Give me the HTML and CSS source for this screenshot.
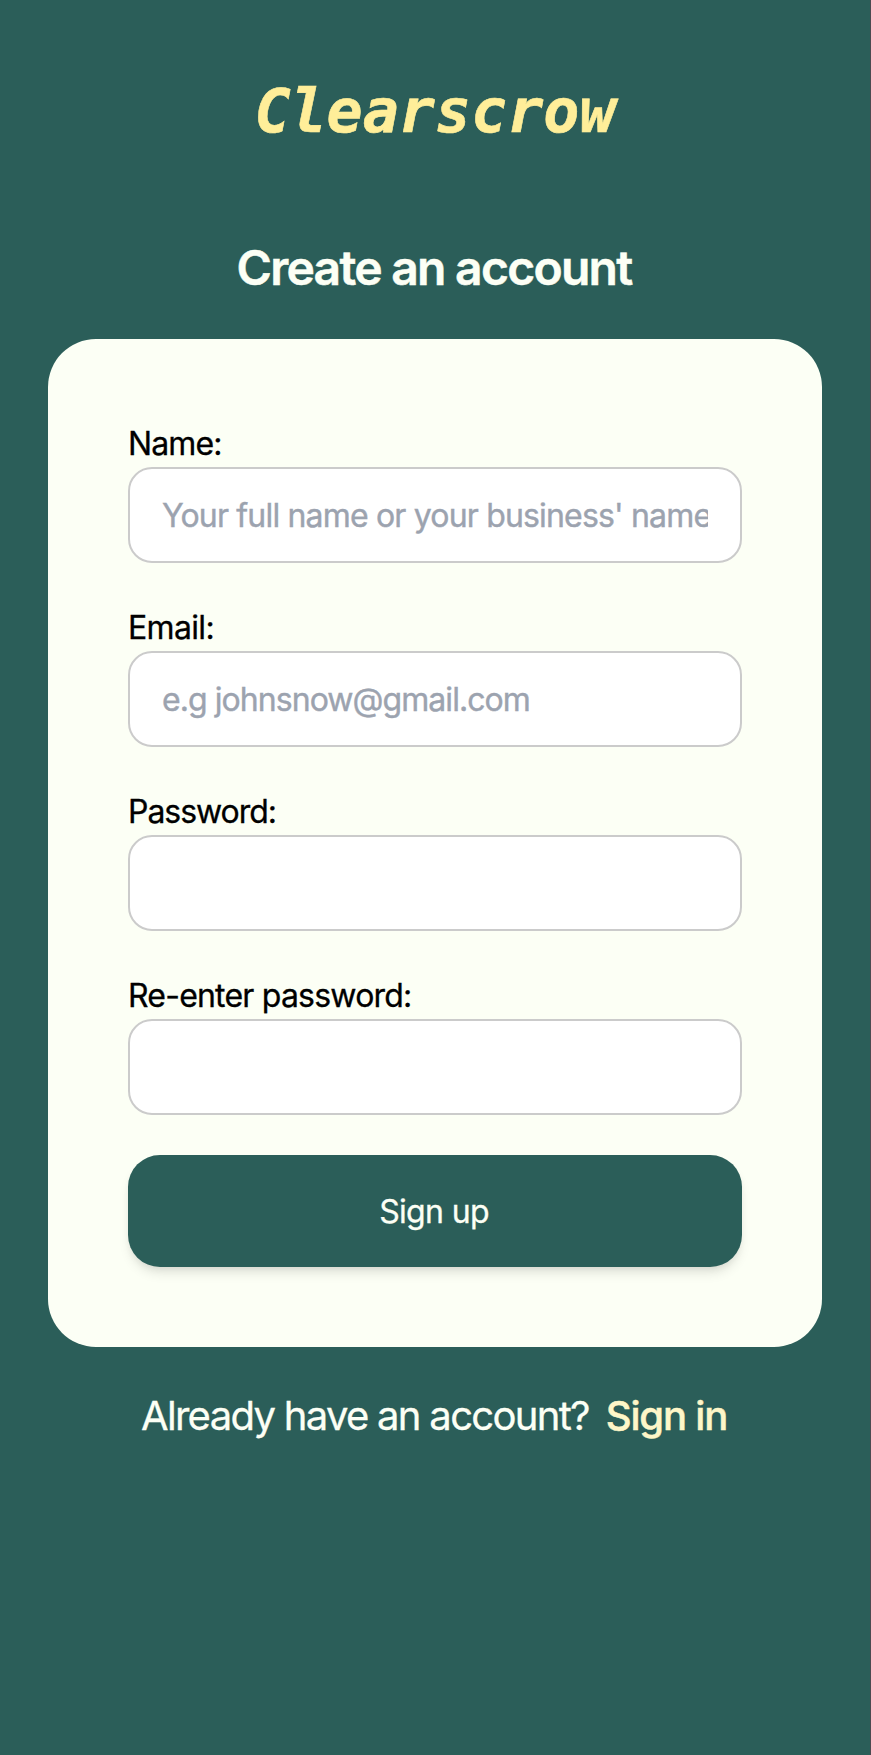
FILE: index.html
```html
<!DOCTYPE html>
<html lang="en">
<head>
<meta charset="utf-8">
<title>Clearscrow - Create an account</title>
<link rel="stylesheet" href="styles.css">
</head>
<body>
<main class="page">
  <div class="logo">Clearscrow</div>
  <h1 class="title">Create an account</h1>
  <form class="card">
    <div class="field">
      <label class="label label-name" for="name">Name:</label>
      <input class="input input-name" id="name" type="text" placeholder="Your full name or your business' name">
    </div>
    <div class="field">
      <label class="label label-email" for="email">Email:</label>
      <input class="input input-email" id="email" type="email" placeholder="e.g johnsnow@gmail.com">
    </div>
    <div class="field">
      <label class="label label-password" for="password">Password:</label>
      <input class="input" id="password" type="password">
    </div>
    <div class="field">
      <label class="label" for="confirm">Re-enter password:</label>
      <input class="input" id="confirm" type="password">
    </div>
    <button class="submit" type="button">Sign up</button>
  </form>
  <p class="footer"><span class="question">Already have an account?</span><a class="signin" href="#">Sign in</a></p>
</main>
</body>
</html>
```
FILE: styles.css
```css
* { box-sizing: border-box; }

body {
  margin: 0;
  background: #2b5e59;
  font-family: Inter, "Liberation Sans", sans-serif;
  font-size: 32px;
  line-height: 48px;
  -webkit-text-stroke-width: 0.3px;
  color: #000;
}

.page {
  min-height: 1755px;
  padding: 81px 48px 0;
  border-right: 1px solid #4b4a50;
  display: flex;
  flex-direction: column;
  align-items: stretch;
}

.logo {
  font: italic 700 60px/60px "DejaVu Sans Mono", monospace;
  -webkit-text-stroke-width: 0.6px;
  color: #ffee99;
  text-align: center;
}

.title {
  margin: 95px 0 39px;
  padding-right: 2px;
  font-size: 48px;
  line-height: 64px;
  font-weight: 600;
  -webkit-text-stroke-width: 0.5px;
  letter-spacing: -1.72px;
  color: #fcfff5;
  text-align: center;
}

.card {
  padding: 80px;
  border-radius: 48px;
  background: #fcfff5;
  display: flex;
  flex-direction: column;
  gap: 40px;
}

.field {
  display: flex;
  flex-direction: column;
}

.label {
  height: 48px;
  padding-top: 1px;
  letter-spacing: -0.79px;
}
.label-name { letter-spacing: -0.9px; }
.label-email { letter-spacing: -0.67px; }
.label-password { letter-spacing: -1.05px; }

.input {
  width: 100%;
  height: 96px;
  padding: 0 32px;
  border: 2px solid #cbcbcb;
  border-radius: 24px;
  background: #fff;
  font: inherit;
  outline: none;
}

.input::placeholder {
  color: #9ca3af;
  opacity: 1;
}

.input-name {
  letter-spacing: -0.82px;
  -webkit-text-stroke-width: 0.4px;
}
.input-email {
  letter-spacing: -0.94px;
  -webkit-text-stroke-width: 0.4px;
}

.submit {
  height: 112px;
  padding: 2px 2px 0 0;
  border: 0;
  border-radius: 32px;
  background: #2b5e59;
  color: #fcfff5;
  font: inherit;
  letter-spacing: -0.67px;
  box-shadow: 0 8px 12px -2px rgba(0, 0, 0, 0.1), 0 4px 8px -4px rgba(0, 0, 0, 0.1);
}

.footer {
  margin: 41px 0 0;
  padding-right: 2px;
  display: flex;
  justify-content: center;
  gap: 17px;
  font-size: 40px;
  line-height: 56px;
  color: #fcfff5;
}

.question { letter-spacing: -1.69px; }

.signin {
  color: #fef6c8;
  font-weight: 500;
  -webkit-text-stroke-width: 0.5px;
  letter-spacing: -1.2px;
  text-decoration: none;
}
```
